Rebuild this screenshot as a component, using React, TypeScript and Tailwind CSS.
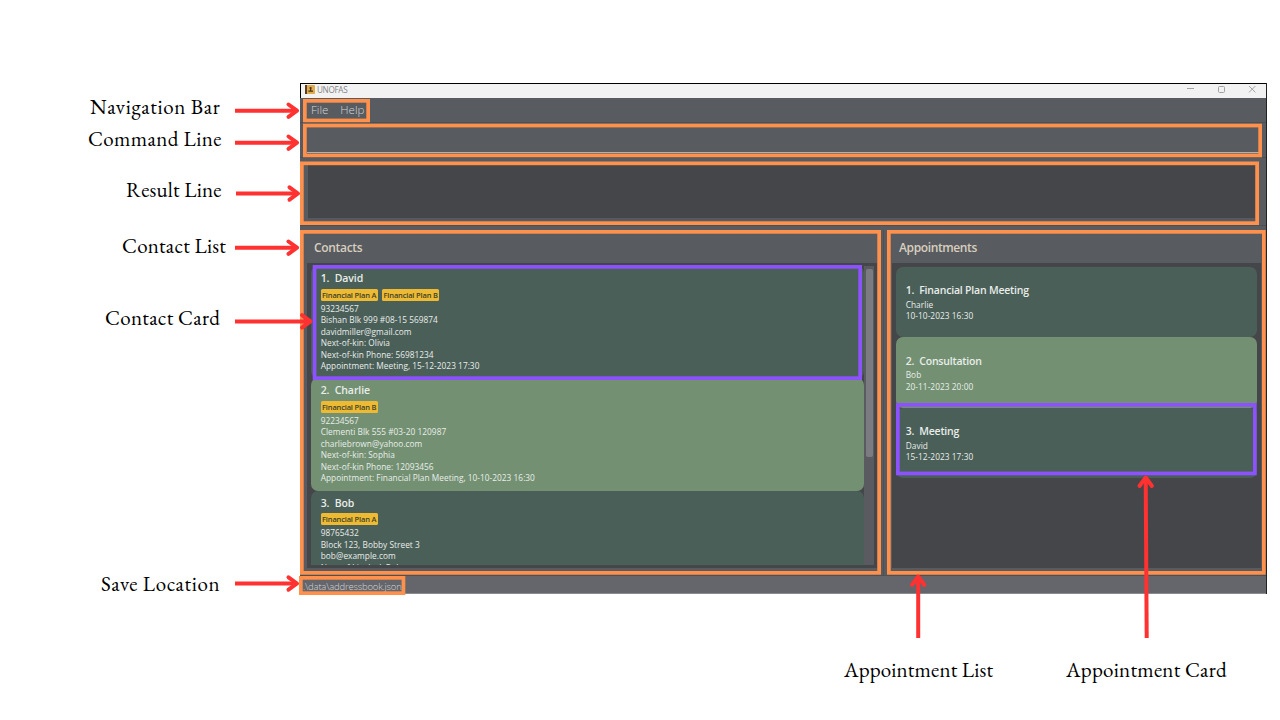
import React from "react";

type Contact = { title: string; tags: string[]; lines: string[] };
type Appointment = { title: string; who: string; when: string };

const contacts: Contact[] = [
  {
    title: "1.\u00a0\u00a0David",
    tags: ["Financial Plan A", "Financial Plan B"],
    lines: [
      "93234567",
      "Bishan Blk 999 #08-15 569874",
      "davidmiller@gmail.com",
      "Next-of-kin: Olivia",
      "Next-of-kin Phone: 56981234",
      "Appointment: Meeting, 15-12-2023 17:30",
    ],
  },
  {
    title: "2.\u00a0\u00a0Charlie",
    tags: ["Financial Plan B"],
    lines: [
      "92234567",
      "Clementi Blk 555 #03-20 120987",
      "charliebrown@yahoo.com",
      "Next-of-kin: Sophia",
      "Next-of-kin Phone: 12093456",
      "Appointment: Financial Plan Meeting, 10-10-2023 16:30",
    ],
  },
  {
    title: "3.\u00a0\u00a0Bob",
    tags: ["Financial Plan A"],
    lines: ["98765432", "Block 123, Bobby Street 3", "bob@example.com", "Next-of-kin: Jack Bob"],
  },
];

const appointments: Appointment[] = [
  { title: "1.\u00a0\u00a0Financial Plan Meeting", who: "Charlie", when: "10-10-2023 16:30" },
  { title: "2.\u00a0\u00a0Consultation", who: "Bob", when: "20-11-2023 20:00" },
  { title: "3.\u00a0\u00a0Meeting", who: "David", when: "15-12-2023 17:30" },
];

function TitleBar() {
  return (
    <div className="flex h-[15px] shrink-0 items-start border-t border-l border-black bg-[#f2f2f2] pl-[4px]">
      <svg className="mt-[1px]" width="10" height="9" viewBox="0 0 10 9">
        <rect x="0" y="0" width="10" height="9" rx="0.8" fill="#e0ab4f" />
        <rect x="0" y="0" width="2" height="9" fill="#5a3d22" />
        <circle cx="5.6" cy="3" r="1.1" fill="#4a3319" />
        <path d="M3.400 6.800h4.600v-1.200H6.300V3.500H5.100v2.100H3.400z" fill="#4a3319" />
      </svg>
      <span className="ml-[2px] text-[8.200px] leading-[11px] tracking-[-0.350px] text-[#858585]">UNOFAS</span>
      <svg className="ml-auto mr-[8px]" width="72" height="12" viewBox="0 0 72 12" fill="none" stroke="#a3a3a3" strokeWidth="1">
        <path d="M1 4.500h7" />
        <rect x="32.500" y="2.500" width="6" height="6" rx="1" />
        <path d="M63 2l6.400 6.400M69.400 2L63 8.400" />
      </svg>
    </div>
  );
}

function ContactCard({ contact, green }: { contact: Contact; green: boolean }) {
  return (
    <article
      className={`flex h-[112.300px] shrink-0 flex-col rounded-[7px] pl-[9.700px] pt-[5px] text-[#e9edea] ${green ? "bg-[#739172]" : "bg-[#4a5f58]"}`}
    >
      <h3 className="h-[14px] text-[10.500px] leading-[14px] font-semibold tracking-[-0.080px]">{contact.title}</h3>
      <div className="mt-[3.500px] flex h-[12px] gap-[4.500px]">
        {contact.tags.map((t) => (
          <span
            key={t}
            className="h-[12px] w-[57px] rounded-[1.500px] bg-[#eeb933] text-center text-[7.500px] leading-[12px] font-semibold tracking-[-0.160px] whitespace-nowrap text-[#3c4428]"
          >
            {t}
          </span>
        ))}
      </div>
      <div className="mt-[2.200px] text-[8.300px] leading-[11.450px] tracking-[0.030px] whitespace-nowrap">
        {contact.lines.map((l) => (
          <p key={l}>{l}</p>
        ))}
      </div>
    </article>
  );
}

function AppointmentCard({ item, green }: { item: Appointment; green: boolean }) {
  return (
    <article
      className={`flex h-[70.600px] flex-col rounded-[7px] pl-[9.700px] pt-[16.700px] text-[#e9edea] ${green ? "bg-[#739172]" : "bg-[#4a5f58]"}`}
    >
      <h3 className="h-[15.500px] text-[10.500px] leading-[14px] font-semibold tracking-[-0.200px]">{item.title}</h3>
      <p className="text-[8.300px] leading-[11.400px] tracking-[0.060px]">{item.who}</p>
      <p className="text-[8.300px] leading-[11.400px] tracking-[0.060px]">{item.when}</p>
    </article>
  );
}

function AppWindow() {
  return (
    <div className="flex h-[511px] w-[967px] flex-col border-r border-[#222] bg-[#585c60] font-['Open_Sans','Noto_Sans',sans-serif]">
      <TitleBar />
      <nav className="flex h-[25px] shrink-0 items-center gap-[12px] border-b border-[#4c4f53] pl-[11px] text-[11.500px] font-light text-[#d2d4d6]">
        <span>File</span>
        <span>Help</span>
      </nav>
      <div className="h-[35px] shrink-0 border-b border-[#4c4f53] px-[7px] pt-[4px]">
        <div className="h-[26px] border-b border-[#b5b1a8]" />
      </div>
      <div className="h-[68px] shrink-0 border-b border-[#4c4f53] pr-[11px] pl-[8px] pt-[7px]">
        <div className="h-[55px] border-b-2 border-[#555960] bg-[#454649]" />
      </div>
      <div className="flex h-[349px] shrink-0 pt-[4px]">
        <section className="flex w-[584px] flex-col border-r border-[#4d5054] pr-[6px] pl-[7px]">
          <h2 className="h-[33px] pl-[7px] text-[12px] leading-[36px] font-semibold tracking-[-0.320px] text-[#d8cebf]">Contacts</h2>
          <div className="flex h-[305px] bg-[#454649] pt-[3px] pb-[3px] pl-[4px]">
            <div className="flex w-[553px] flex-col overflow-hidden">
              {contacts.map((c, i) => (
                <ContactCard key={c.title} contact={c} green={i % 2 === 1} />
              ))}
            </div>
            <div className="w-[10px] bg-[#595b60] px-[1.500px] pt-[3px]">
              <div className="h-[188px] rounded-[2px] bg-[#7a7c82]" />
            </div>
          </div>
        </section>
        <section className="flex flex-1 flex-col pr-[5px] pl-[8px]">
          <h2 className="h-[33px] pl-[7px] text-[12px] leading-[36px] font-semibold tracking-[-0.380px] text-[#d8cebf]">Appointments</h2>
          <div className="h-[305px] bg-[#454649] pt-[3.500px] pr-[4px] pl-[4px]">
            {appointments.map((a, i) => (
              <AppointmentCard key={a.title} item={a} green={i % 2 === 1} />
            ))}
          </div>
        </section>
      </div>
      <footer className="flex flex-1 items-center border-t border-b border-t-[#4f5053] border-b-[#8a8b8e] bg-[#64666b] pt-[4px] pl-[3px] text-[9.500px] leading-[12px] font-light tracking-[-0.200px] text-[#d2d4d6]">
        .\data\addressbook.json
      </footer>
    </div>
  );
}

const highlights = [
  { x1: 303, y1: 99, x2: 370, y2: 122.3, c: "#ff914d" },
  { x1: 303, y1: 123.700, x2: 1262, y2: 157.300, c: "#ff914d" },
  { x1: 300, y1: 161.500, x2: 1259, y2: 225, c: "#ff914d" },
  { x1: 300, y1: 230, x2: 881, y2: 574.700, c: "#ff914d" },
  { x1: 887, y1: 230, x2: 1265.700, y2: 574.700, c: "#ff914d" },
  { x1: 299, y1: 576, x2: 405.300, y2: 595, c: "#ff914d" },
  { x1: 312.700, y1: 265, x2: 862, y2: 380, c: "#8c52ff" },
  { x1: 896, y1: 403, x2: 1256.700, y2: 475.300, c: "#8c52ff" },
];

const arrows = [
  ["M235 110.700H297", "M288.500 104.500L297 110.700L288.500 116.900"],
  ["M235 142.700H297", "M288.500 136.500L297 142.700L288.500 148.900"],
  ["M236 193.500H298", "M289.500 187.300L298 193.500L289.500 199.700"],
  ["M235 247.700H297", "M288.500 241.500L297 247.700L288.500 253.900"],
  ["M235 321.400H310.500", "M302 315.200L310.500 321.400L302 327.600"],
  ["M235 583.500H297", "M288.500 577.300L297 583.500L288.500 589.700"],
  ["M918.200 638V576.500", "M912 585L918.200 576.500L924.400 585"],
  ["M1146.700 638L1145.700 477.500", "M1139.500 486L1145.700 477.500L1151.900 486"],
];

function Annotations() {
  return (
    <svg className="absolute top-0 left-0" width="1280" height="720" viewBox="0 0 1280 720" fill="none">
      {highlights.map((h, i) => (
        <rect
          key={i}
          x={h.x1 + 1.85}
          y={h.y1 + 1.85}
          width={h.x2 - h.x1 - 3.7}
          height={h.y2 - h.y1 - 3.7}
          stroke={h.c}
          strokeWidth="3.700"
        />
      ))}
      {arrows.map(([shaft, head]) => (
        <g key={shaft} stroke="#ff3131" strokeWidth="4" strokeLinejoin="round">
          <path d={shaft} />
          <path d={head} strokeLinecap="round" />
        </g>
      ))}
    </svg>
  );
}

const labels = [
  { text: "Navigation Bar", place: "left-[90px] top-[95px] tracking-[0.620px]" },
  { text: "Command Line", place: "left-[88px] top-[127px] tracking-[0.400px]" },
  { text: "Result Line", place: "left-[126px] top-[178px] tracking-[0.200px]" },
  { text: "Contact List", place: "left-[122px] top-[234px] tracking-[0.220px]" },
  { text: "Contact Card", place: "left-[105px] top-[306px] tracking-[0.300px]" },
  { text: "Save Location", place: "left-[101px] top-[572px] tracking-[0.600px]" },
  { text: "Appointment List", place: "left-[844px] top-[658px] tracking-[0.150px]" },
  { text: "Appointment Card", place: "left-[1066px] top-[658px] tracking-[0.250px]" },
];

export default function App() {
  return (
    <main className="relative h-[720px] w-[1280px] overflow-hidden bg-white pt-[83px] pl-[300px]">
      <AppWindow />
      <Annotations />
      {labels.map((l) => (
        <span
          key={l.text}
          className={`absolute font-['EB_Garamond','Liberation_Serif',serif] text-[21px] leading-[24px] whitespace-nowrap text-black ${l.place}`}
        >
          {l.text}
        </span>
      ))}
    </main>
  );
}
